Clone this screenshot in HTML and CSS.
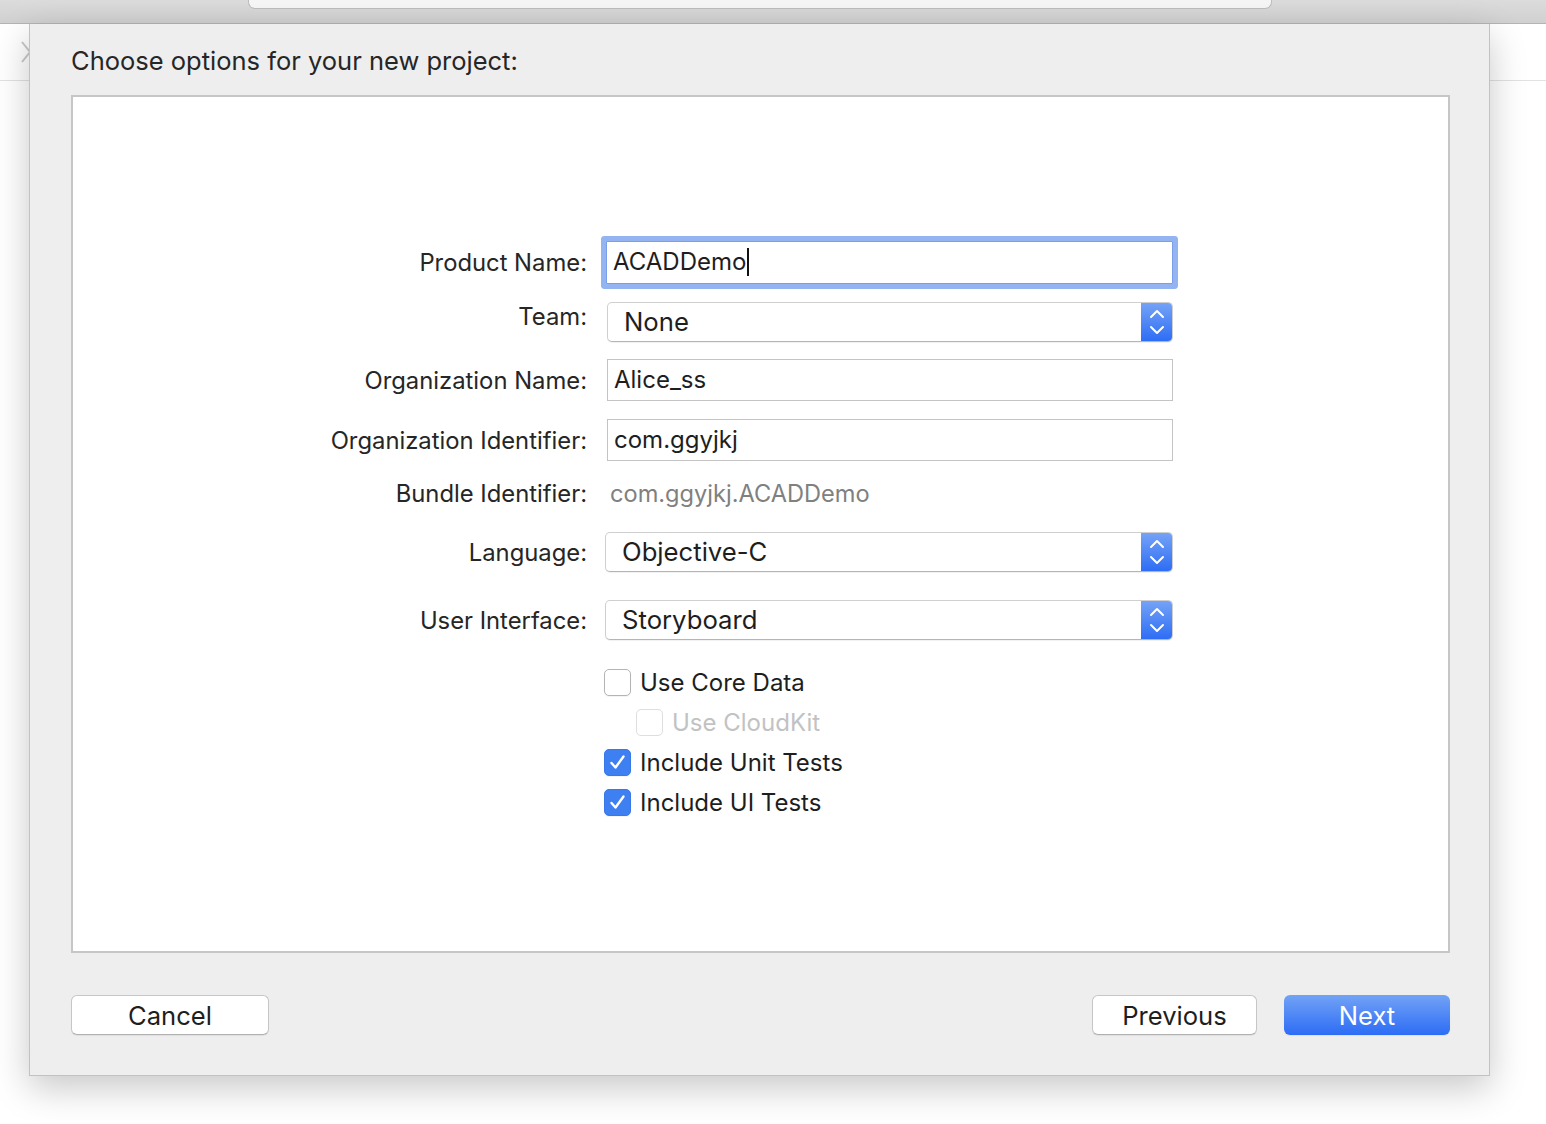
FILE: index.html
```html
<!DOCTYPE html>
<html lang="en">
<head>
    <meta charset="UTF-8">
    <title>Choose options for your new project</title>
    <link rel="stylesheet" href="styles.css">
</head>
<body>

    <div class="toolbar">
        <div class="toolbar-tab"></div>
    </div>

    <div class="stage">
        <div class="gutter gutter-left">
            <svg class="chevron" width="12" height="24" viewBox="0 0 12 24">
                <polyline points="2,2 10,12 2,22" fill="none" stroke="#c8c8c8" stroke-width="2"/>
            </svg>
        </div>

        <div class="sheet">
            <h1 class="sheet-title">Choose options for your new project:</h1>

            <div class="panel">
                <div class="form">
                    <div class="row row-1">
                        <label class="label">Product Name:</label>
                        <div class="field field-focus">ACADDemo<span class="caret"></span></div>
                    </div>

                    <div class="row row-2">
                        <label class="label label-high">Team:</label>
                        <div class="popup popup-team">
                            <span class="popup-text">None</span>
                            <span class="stepper">
                                <svg width="32" height="40" viewBox="0 0 32 40">
                                    <polyline points="10,15 16,9 22,15" fill="none" stroke="#fff" stroke-width="2" stroke-linecap="round" stroke-linejoin="round"/>
                                    <polyline points="10,25 16,31 22,25" fill="none" stroke="#fff" stroke-width="2" stroke-linecap="round" stroke-linejoin="round"/>
                                </svg>
                            </span>
                        </div>
                    </div>

                    <div class="row row-3">
                        <label class="label">Organization Name:</label>
                        <div class="field">Alice_ss</div>
                    </div>

                    <div class="row row-4">
                        <label class="label">Organization Identifier:</label>
                        <div class="field">com.ggyjkj</div>
                    </div>

                    <div class="row row-5">
                        <label class="label">Bundle Identifier:</label>
                        <div class="static-value">com.ggyjkj.ACADDemo</div>
                    </div>

                    <div class="row row-6">
                        <label class="label">Language:</label>
                        <div class="popup">
                            <span class="popup-text">Objective-C</span>
                            <span class="stepper">
                                <svg width="32" height="40" viewBox="0 0 32 40">
                                    <polyline points="10,15 16,9 22,15" fill="none" stroke="#fff" stroke-width="2" stroke-linecap="round" stroke-linejoin="round"/>
                                    <polyline points="10,25 16,31 22,25" fill="none" stroke="#fff" stroke-width="2" stroke-linecap="round" stroke-linejoin="round"/>
                                </svg>
                            </span>
                        </div>
                    </div>

                    <div class="row row-7">
                        <label class="label">User Interface:</label>
                        <div class="popup">
                            <span class="popup-text">Storyboard</span>
                            <span class="stepper">
                                <svg width="32" height="40" viewBox="0 0 32 40">
                                    <polyline points="10,15 16,9 22,15" fill="none" stroke="#fff" stroke-width="2" stroke-linecap="round" stroke-linejoin="round"/>
                                    <polyline points="10,25 16,31 22,25" fill="none" stroke="#fff" stroke-width="2" stroke-linecap="round" stroke-linejoin="round"/>
                                </svg>
                            </span>
                        </div>
                    </div>

                    <div class="row row-check row-check-first">
                        <span></span>
                        <div class="check">
                            <span class="box"></span>
                            <span class="check-text">Use Core Data</span>
                        </div>
                    </div>

                    <div class="row row-check">
                        <span></span>
                        <div class="check check-sub disabled">
                            <span class="box"></span>
                            <span class="check-text">Use CloudKit</span>
                        </div>
                    </div>

                    <div class="row row-check">
                        <span></span>
                        <div class="check">
                            <span class="box checked">
                                <svg width="27" height="27" viewBox="0 0 27 27">
                                    <polyline points="7.5,14 11.5,18.5 19.5,7.5" fill="none" stroke="#fff" stroke-width="2.4" stroke-linecap="round" stroke-linejoin="round"/>
                                </svg>
                            </span>
                            <span class="check-text">Include Unit Tests</span>
                        </div>
                    </div>

                    <div class="row row-check">
                        <span></span>
                        <div class="check">
                            <span class="box checked">
                                <svg width="27" height="27" viewBox="0 0 27 27">
                                    <polyline points="7.5,14 11.5,18.5 19.5,7.5" fill="none" stroke="#fff" stroke-width="2.4" stroke-linecap="round" stroke-linejoin="round"/>
                                </svg>
                            </span>
                            <span class="check-text">Include UI Tests</span>
                        </div>
                    </div>
                </div>
            </div>

            <div class="footer">
                <button class="btn btn-cancel">Cancel</button>
                <div class="footer-right">
                    <button class="btn btn-previous">Previous</button>
                    <button class="btn btn-next">Next</button>
                </div>
            </div>
        </div>

        <div class="gutter gutter-right"></div>
    </div>

</body>
</html>
```

FILE: styles.css
```css
/* Base */
* {
    margin: 0;
    padding: 0;
    box-sizing: border-box;
}

body {
    font-family: Inter, "Noto Sans", sans-serif;
    background-color: #fff;
    color: #262626;
    width: 1546px;
    height: 1124px;
    overflow: hidden;
}

/* Window toolbar at the top */
.toolbar {
    height: 24px;
    background: linear-gradient(#dcdcdc, #d0d0d0);
    border-bottom: 1px solid #b4b4b4;
}

.toolbar-tab {
    margin-left: 248px;
    width: 1024px;
    height: 9px;
    background-color: #f6f6f6;
    border: 1px solid #bdbdbd;
    border-top: none;
    border-radius: 0 0 7px 7px;
}

/* Window content behind the sheet */
.stage {
    display: flex;
    height: 1100px;
}

.gutter {
    height: 57px;
    border-bottom: 1px solid #e2e2e2;
}

.gutter-left {
    width: 29px;
    padding: 16px 0 0 20px;
}

.gutter-right {
    flex: 1;
}

.chevron {
    display: block;
}

/* The sheet */
.sheet {
    position: relative;
    z-index: 1;
    width: 1461px;
    height: 1052px;
    background-color: #eeeeee;
    border: 1px solid #c2c2c2;
    border-top: none;
    padding: 22px 39px 0 41px;
    box-shadow: 0 12px 34px rgba(0, 0, 0, 0.22);
}

.sheet-title {
    font-size: 25.5px;
    font-weight: 400;
    line-height: 30px;
    color: #262626;
    margin-bottom: 19px;
}

.panel {
    width: 1379px;
    height: 858px;
    background-color: #fff;
    border: 2px solid #c6c6c6;
    padding-top: 144px;
}

/* Form */
.form {
    margin-left: 214px;
}

.row {
    display: grid;
    grid-template-columns: 300px 568px;
    column-gap: 18px;
    align-items: center;
    height: 40px;
}

.row-1 { height: 43px; }
.row-2 { margin-top: 18px; }
.row-3 { margin-top: 17px; height: 42px; }
.row-4 { margin-top: 18px; height: 42px; }
.row-5 { margin-top: 12px; }
.row-6 { margin-top: 19px; }
.row-7 { margin-top: 28px; }

.row-check {
    height: 27px;
    margin-top: 13px;
}

.row-check-first {
    margin-top: 28px;
}

.label {
    font-size: 23.8px;
    text-align: right;
    color: #262626;
}

.label-high {
    margin-top: -12px;
}

.field {
    margin-left: 2px;
    height: 42px;
    background-color: #fff;
    border: 1px solid #c4c4c4;
    padding-left: 6px;
    font-size: 24px;
    line-height: 40px;
    color: #1e1e1e;
}

.field-focus {
    margin-left: 1px;
    height: 43px;
    border-color: #7a9fe8;
    border-radius: 1px;
    box-shadow: 0 0 0 5px #93b3f1;
}

.caret {
    display: inline-block;
    width: 2px;
    height: 28px;
    background-color: #111;
    vertical-align: -6px;
    margin-left: 1px;
}

.static-value {
    margin-left: 5px;
    font-size: 23.6px;
    color: #808080;
}

/* Pop-up buttons */
.popup {
    display: flex;
    height: 40px;
    background-color: #fff;
    border: 1px solid #cfcfcf;
    border-bottom-color: #b5b5b5;
    border-radius: 5px;
    box-shadow: 0 1px 1px rgba(0, 0, 0, 0.06);
    overflow: hidden;
}

.popup-team {
    margin-left: 2px;
}

.popup-text {
    flex: 1;
    padding-left: 16px;
    font-size: 25.7px;
    line-height: 38px;
    color: #1e1e1e;
}

.stepper {
    width: 32px;
    margin: -1px -1px -1px 0;
    background: linear-gradient(#76a4f6, #2c6cf5);
}

.stepper svg {
    display: block;
}

/* Checkboxes */
.check {
    display: flex;
    align-items: center;
    margin-left: -1px;
}

.check-sub {
    margin-left: 31px;
}

.box {
    width: 27px;
    height: 27px;
    background-color: #fff;
    border: 1px solid #b4b4b4;
    border-radius: 5px;
    margin-right: 9px;
    box-shadow: 0 1px 1px rgba(0, 0, 0, 0.05);
}

.box.checked {
    background-color: #3e7ff2;
    border-color: #3a78e8;
}

.box svg {
    display: block;
    margin: -1px;
}

.check-text {
    font-size: 24px;
    color: #1e1e1e;
}

.disabled .box {
    border-color: #dedede;
    box-shadow: none;
}

.disabled .check-text {
    color: #c2c2c2;
}

/* Footer buttons */
.footer {
    display: flex;
    justify-content: space-between;
    margin-top: 42px;
    width: 1379px;
}

.footer-right {
    display: flex;
    gap: 27px;
}

.btn {
    height: 40px;
    font-family: Inter, "Noto Sans", sans-serif;
    font-size: 25.6px;
    color: #1e1e1e;
    background-color: #fff;
    border: 1px solid #c6c6c6;
    border-bottom-color: #b0b0b0;
    border-radius: 6px;
    box-shadow: 0 1px 1px rgba(0, 0, 0, 0.06);
}

.btn-cancel {
    width: 198px;
}

.btn-previous {
    width: 165px;
}

.btn-next {
    width: 166px;
    color: #fff;
    border: none;
    background: linear-gradient(#72a3f6, #2d6cf5);
}
```
